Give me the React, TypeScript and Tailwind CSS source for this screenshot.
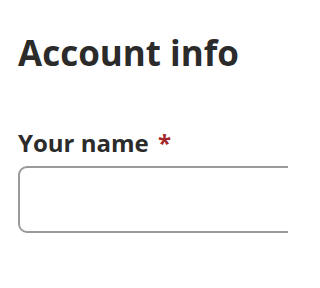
import React from "react";

export default function App() {
  return (
    <div className="w-[288px] h-[288px] overflow-hidden bg-white [font-family:'Open_Sans',sans-serif] text-[#2b2b2b]">
      <div className="pl-[18px] pt-[29px] w-[340px]">
        <h1 className="text-[35px] leading-[48px] font-bold">Account info</h1>
        <form className="mt-[50px]">
          <label className="block text-[24px] leading-[32px] font-bold">
            Your name <span className="ml-[3px] text-[#a4262c]">*</span>
          </label>
          <input
            type="text"
            className="mt-[7px] block w-full h-[67px] rounded-[9px] border-2 border-[#9a9a9a] bg-white"
          />
        </form>
      </div>
    </div>
  );
}
